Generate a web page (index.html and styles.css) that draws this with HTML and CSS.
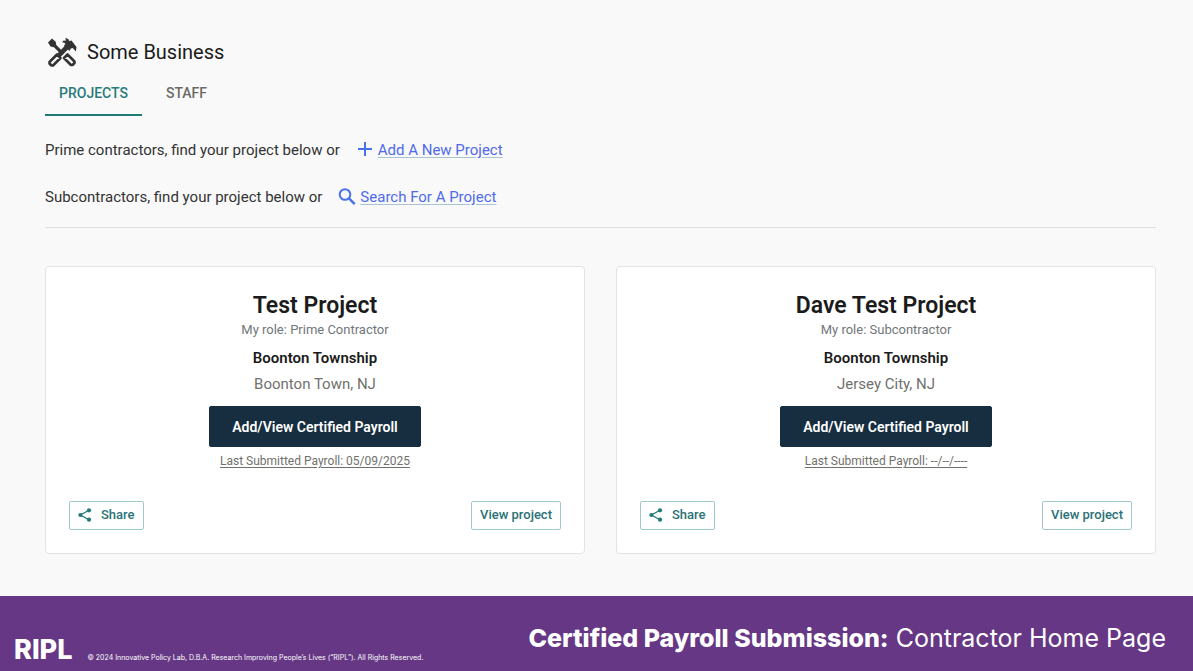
FILE: index.html
```html
<!DOCTYPE html>
<html lang="en">
<head>
    <meta charset="UTF-8">
    <meta name="viewport" content="width=device-width, initial-scale=1.0">
    <title>Certified Payroll - Contractor Home Page</title>
    <link rel="stylesheet" href="styles.css">
</head>
<body>
    <svg class="sprite" width="0" height="0" aria-hidden="true">
        <symbol id="icon-share" viewBox="0 0 14 14">
            <path d="M11 2.2 2.4 7l8.6 4.8" fill="none" stroke="currentColor" stroke-width="1.3"/>
            <circle cx="11" cy="2.3" r="2.1"/>
            <circle cx="2.4" cy="7" r="2.1"/>
            <circle cx="11" cy="11.7" r="2.1"/>
        </symbol>
    </svg>

    <main>
        <header class="business">
            <svg class="business-icon" viewBox="0 0 30 30" aria-hidden="true">
                <path d="M1 5.5 5 1.5 8.7 4.7 9.300 8 17 15.700l-2.300 2.300L7 10.300 3.500 9.500z"/>
                <path d="M10.500 16.500 18 8.500l3.500 3.500-8 8z"/>
                <path d="M15 5.500 16.500 3.500l2.300.2L18.500.8l3 1.400.7 1.800 2.300-.5 5 6.500-.7 4.500-3-3.500-2 .5-1.300 2.500-5.500-5.500 1.500-1.500-1.500-1.500z"/>
                <path d="M2.500 25 10 17.500l3.500 3.500L6 28.500H4.500L2.500 26.500z" fill="none" stroke="#333" stroke-width="2.6" stroke-linejoin="round"/>
                <path d="M17 21 20.500 17.500l7 7v1.500L25.500 28H24z" fill="none" stroke="#333" stroke-width="2.6" stroke-linejoin="round"/>
            </svg>
            <h1>Some Business</h1>
        </header>

        <nav class="tabs">
            <a href="#projects" class="tab active">PROJECTS</a>
            <a href="#staff" class="tab">STAFF</a>
        </nav>

        <p class="hint">
            <span>Prime contractors, find your project below or</span>
            <svg class="hint-icon" viewBox="0 0 18 18" aria-hidden="true">
                <path d="M9 1v14M2 8h14" fill="none" stroke="currentColor" stroke-width="2"/>
            </svg>
            <a href="#add">Add A New Project</a>
        </p>
        <p class="hint">
            <span>Subcontractors, find your project below or</span>
            <svg class="hint-icon" viewBox="0 0 18 18" aria-hidden="true">
                <circle cx="7" cy="6.5" r="5.3" fill="none" stroke="currentColor" stroke-width="2"/>
                <path d="m10.700 10.200 6 6" fill="none" stroke="currentColor" stroke-width="2.4"/>
            </svg>
            <a href="#search">Search For A Project</a>
        </p>

        <section class="projects" id="projects">
            <article class="card">
                <h2>Test Project</h2>
                <p class="role">My role: Prime Contractor</p>
                <p class="agency">Boonton Township</p>
                <p class="place">Boonton Town, NJ</p>
                <button type="button" class="btn-primary">Add/View Certified Payroll</button>
                <a href="#payroll" class="last-payroll">Last Submitted Payroll: 05/09/2025</a>
                <div class="card-actions">
                    <button type="button" class="btn-outline"><svg class="share-icon" aria-hidden="true"><use href="#icon-share"/></svg>Share</button>
                    <button type="button" class="btn-outline">View project</button>
                </div>
            </article>

            <article class="card">
                <h2>Dave Test Project</h2>
                <p class="role">My role: Subcontractor</p>
                <p class="agency">Boonton Township</p>
                <p class="place">Jersey City, NJ</p>
                <button type="button" class="btn-primary">Add/View Certified Payroll</button>
                <a href="#payroll" class="last-payroll">Last Submitted Payroll: --/--/----</a>
                <div class="card-actions">
                    <button type="button" class="btn-outline"><svg class="share-icon" aria-hidden="true"><use href="#icon-share"/></svg>Share</button>
                    <button type="button" class="btn-outline">View project</button>
                </div>
            </article>
        </section>
    </main>

    <footer>
        <span class="logo">RIPL</span>
        <small>© 2024 Innovative Policy Lab, D.B.A. Research Improving People’s Lives (“RIPL”). All Rights Reserved.</small>
        <p class="caption"><strong>Certified Payroll Submission:</strong> Contractor Home Page</p>
    </footer>
</body>
</html>
```

FILE: styles.css
```css
* { box-sizing: border-box; }
body { margin: 0; min-height: 100vh; display: flex; flex-direction: column; font-family: Roboto, Arial, sans-serif; font-size: 15px; color: #333; background-color: #f9f9f9; }
h1, h2, p { margin: 0; }
button { font-family: inherit; cursor: pointer; }
.sprite { position: absolute; }
main { flex: 1; padding: 36px 37px 42px 45px; }

.business { display: flex; align-items: center; gap: 10px; height: 32px; padding-left: 2px; }
.business-icon { width: 30px; height: 30px; fill: #333; }
h1 { font-size: 20px; font-weight: 400; line-height: 32px; color: #1b1b1b; }

.tabs { display: flex; gap: 10px; }
.tab { padding: 17px 14px 13px; border-bottom: 2px solid transparent; font-size: 14px; line-height: 16px; font-weight: 500; color: #6b6b66; text-decoration: none; }
.tab.active { color: #2a7a7b; border-bottom-color: #1f7a78; }

.hint { display: flex; align-items: center; margin-top: 23px; line-height: 24px; }
.tabs + .hint { margin-top: 22px; }
.hint a { color: #4f6bed; text-decoration: underline; text-decoration-color: #a9c3d3; text-underline-offset: 2px; }
.hint-icon { width: 18px; height: 18px; margin: 0 4px 0 16px; color: #4a72e8; }

.projects { display: grid; grid-template-columns: 1fr 1fr; gap: 31px; margin-top: 18px; padding-top: 38px; border-top: 1px solid #dfdfdf; }
.card { display: flex; flex-direction: column; align-items: center; padding: 23px; background-color: #fff; border: 1px solid #e3e3e3; border-radius: 4px; text-align: center; }
h2 { font-size: 23px; font-weight: 600; line-height: 31px; color: #1b1b1b; }
.role { font-size: 13px; line-height: 18px; color: #71767a; }
.agency { margin-top: 7px; line-height: 24px; font-weight: 600; color: #1b1b1b; }
.place { line-height: 28px; color: #71716c; }
.btn-primary { height: 41px; margin-top: 8px; padding: 0 22px; border: 1px solid #162e40; border-radius: 2px; background-color: #162e40; color: #fff; font-size: 14px; font-weight: 600; }
.last-payroll { margin-top: 6px; font-size: 12px; line-height: 16px; color: #71716c; text-underline-offset: 2px; }
.card-actions { align-self: stretch; display: flex; justify-content: space-between; margin-top: 32px; }
.btn-outline { display: flex; align-items: center; height: 29px; padding: 0 8px 2px; border: 1px solid #9fc9ca; border-radius: 2px; background-color: #fff; color: #2a7277; font-size: 13px; font-weight: 500; }
.share-icon { width: 14px; height: 14px; margin-right: 9px; fill: #1f7a78; color: #1f7a78; }

footer { display: flex; align-items: flex-end; min-height: 75px; padding: 0 27px 5px 14px; background-color: #663784; color: #fff; font-family: Inter, Arial, sans-serif; }
.logo { font-size: 27px; line-height: 32px; font-weight: 800; }
footer small { margin-left: 15px; font-size: 7px; line-height: 16px; }
.caption { margin-left: auto; padding-bottom: 12px; font-size: 25px; line-height: 32px; font-weight: 400; }
.caption strong { font-weight: 800; }
```
